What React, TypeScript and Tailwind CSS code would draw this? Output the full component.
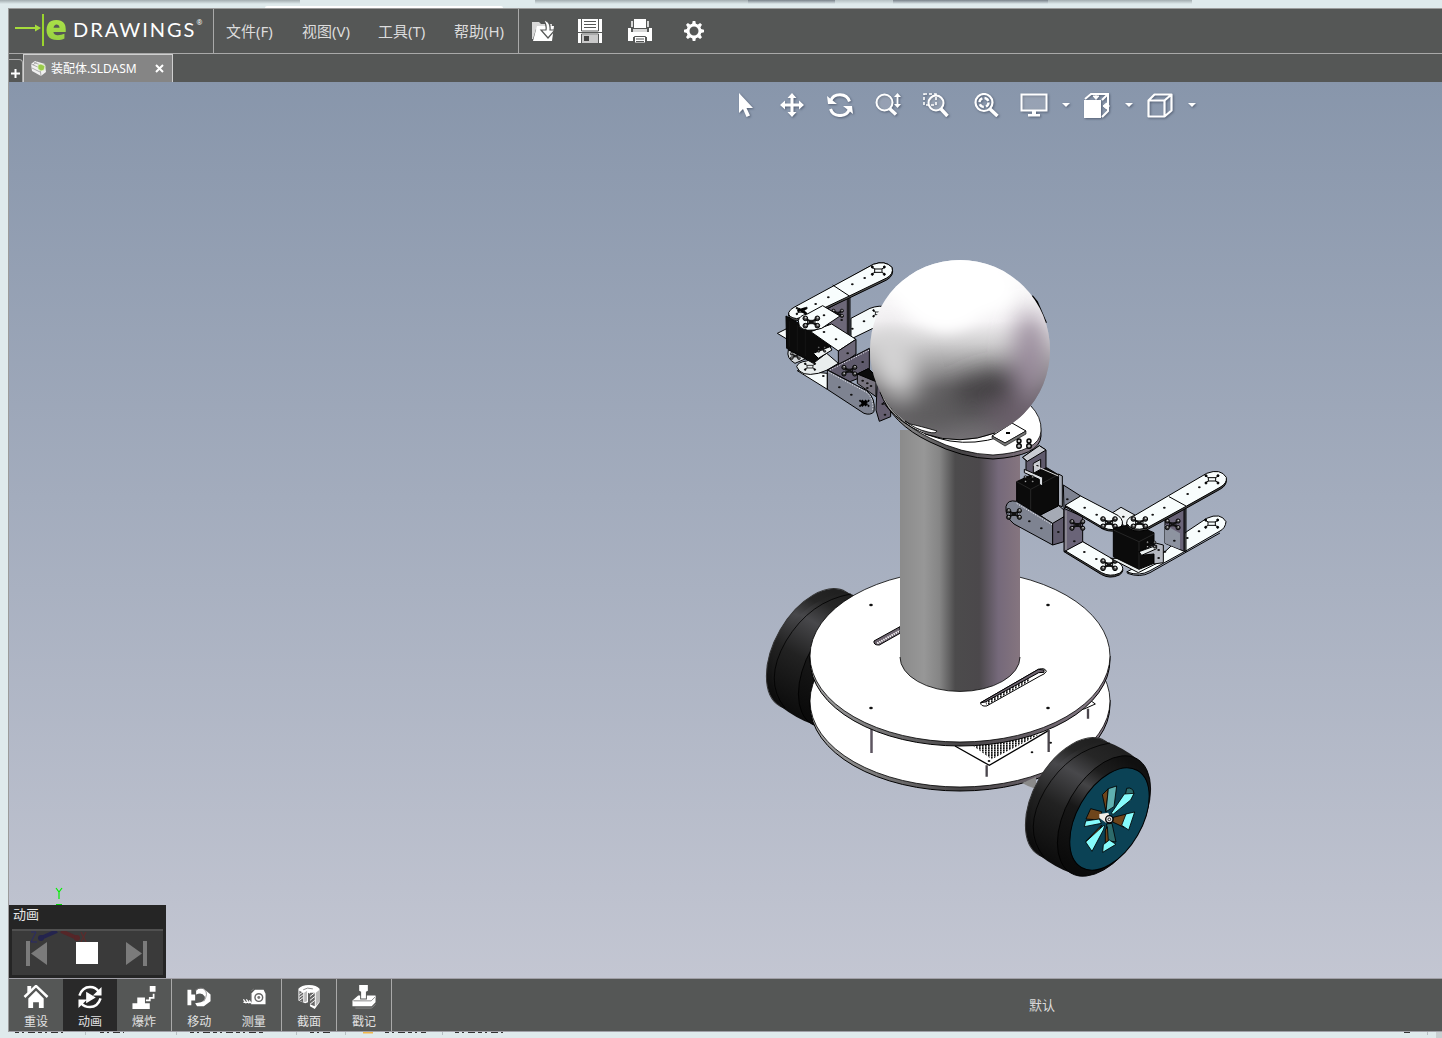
import type { ReactNode } from "react";
import clsx from "clsx";

const cjk = "font-['Noto_Sans','Noto_Sans_CJK_SC',sans-serif]";

function Logo() {
    return (
        <div className="flex h-full w-[205px] shrink-0 items-center border-r border-[#a9a9a9] pl-1.5">
            <svg width="30" height="34" viewBox="0 0 30 34" fill="none">
                <path d="M0 14h22" stroke="#a6dc3c" strokeWidth="2" />
                <path d="M20 10.500l6 3.500-6 3.500z" fill="#a6dc3c" />
                <path d="M28 0v32" stroke="#9ad42e" strokeWidth="2" />
            </svg>
            <span className="w-[26px] bg-gradient-to-b from-[#b4ea4a] to-[#8cc63f] bg-clip-text pb-2 font-['Open_Sans',sans-serif] text-4xl leading-9 font-extrabold text-transparent">
                e
            </span>
            <span className="pb-1 pl-0.5 font-['Lato',sans-serif] text-xl leading-6 font-normal tracking-widest text-white">DRAWINGS</span>
            <span className="pb-4 text-[7px] leading-3 text-white">®</span>
        </div>
    );
}

function IconButton({ label, className, children }: { label: string; className?: string; children: ReactNode }) {
    return (
        <button aria-label={label} className={clsx("flex h-full w-12 shrink-0 items-center justify-center", className)}>
            {children}
        </button>
    );
}

function MenuBar() {
    const menus = ["文件(F)", "视图(V)", "工具(T)", "帮助(H)"];

    return (
        <header className="flex h-[45px] shrink-0 items-center border-b border-[#a9a9a9] bg-[#555756]">
            <Logo />
            <nav className="flex h-full items-center border-r border-[#a9a9a9]">
                {menus.map((menu) => (
                    <button key={menu} className={clsx("w-[76px] pl-3 text-left text-[15px] leading-5 text-[#dcdcdc]", cjk)}>
                        {menu}
                    </button>
                ))}
            </nav>
            <IconButton label="打开" className="ml-px">
                <svg width="24" height="24" viewBox="0 0 24 24">
                    <path d="M0 3h7l2 2h11v5H4L1 20H0z" fill="#d8d8d8" />
                    <path d="M5 7h17l-2 15H1z" fill="#fff" />
                    <path d="M11 1q8 1 7 10h5l-7 8-7-8h5q1-6-3-10z" fill="#fff" stroke="#555756" strokeWidth="1.200" />
                </svg>
            </IconButton>
            <IconButton label="保存" className="-ml-0.5">
                <svg width="24" height="24" viewBox="0 0 24 24">
                    <path d="M0 0h24v24H0z" fill="#fff" />
                    <path d="M3.500 0v12h17V0M0 13.500h24M3.500 24v-9h17v9" fill="none" stroke="#555756" />
                    <path d="M6 2.500h12M6 5.500h12M6 8.500h12" stroke="#555756" strokeWidth="1.200" />
                    <path d="M4 16h16v8H4z" fill="#c9c9c9" />
                    <path d="M6 17h5v5H6z" fill="#444" />
                </svg>
            </IconButton>
            <IconButton label="打印" className="ml-0.5">
                <svg width="24" height="24" viewBox="0 0 24 24">
                    <path d="M3 2h2v6H3zM19 2h2v6h-2z" fill="#d8d8d8" />
                    <path d="M6 0h12v9H6zM0 9h3v4h18V9h3v13h-5v-4H5v4H0z" fill="#fff" />
                    <path d="M5 10h14v3H5z" fill="#d8d8d8" />
                    <path d="M0 13h24v4H0z" fill="#fff" />
                    <path d="M6.500 17.500h11V24h-11z" fill="#fff" stroke="#555756" />
                    <path d="M8 20h8M8 22.500h8" stroke="#555756" />
                </svg>
            </IconButton>
            <IconButton label="选项" className="ml-1.5">
                <svg width="20" height="20" viewBox="-10 -10 20 20">
                    <circle r="6" fill="none" stroke="#fff" strokeWidth="3" />
                    {[0, 45, 90, 135, 180, 225, 270, 315].map((angle) => (
                        <path key={angle} d="M-1.900 -7h3.800l-.6 -3h-2.600z" fill="#fff" transform={`rotate(${angle})`} />
                    ))}
                </svg>
            </IconButton>
        </header>
    );
}

function TabBar() {
    return (
        <div className="flex h-7 shrink-0 items-end bg-[#555756]">
            <button aria-label="新建" className="flex h-[23px] w-3.5 items-center justify-center rounded-tr border-t border-r border-[#a9a9a9] pt-1">
                <svg width="9" height="9" viewBox="0 0 9 9">
                    <path d="M4.500 0v9M0 4.500h9" stroke="#fff" strokeWidth="2" />
                </svg>
            </button>
            <div className="flex h-7 w-[150px] items-center border border-b-0 border-[#cfcfcf] bg-[#858585] pl-1.5">
                <svg width="17" height="17" viewBox="0 0 17 17">
                    <path d="M1 4l4-3 10 3 1 8-5 4-9-5z" fill="#f0f0f0" />
                    <path d="M1 4l9 4 5-4M10 8l1 8M4 2.500l8 3M7 1.500L3 5M2 8l8 4" fill="none" stroke="#999" strokeWidth=".8" />
                    <path d="M8 5l3-1 4 2-1 4-3 1-3-2z" fill="#9acb4a" stroke="#e5f4cc" strokeWidth=".7" />
                </svg>
                <span className={clsx("ml-1 text-xs leading-5 whitespace-nowrap text-white", cjk)}>装配体.SLDASM</span>
                <button aria-label="关闭" className="mr-1 ml-auto p-1">
                    <svg width="9" height="9" viewBox="0 0 9 9">
                        <path d="M1 1l7 7M8 1L1 8" stroke="#fff" strokeWidth="2" />
                    </svg>
                </button>
            </div>
        </div>
    );
}

function Caret() {
    return (
        <button aria-label="更多" className="flex w-[15px] items-center justify-center">
            <svg width="8" height="4" viewBox="0 0 8 4">
                <path d="M0 0h8L4 4z" fill="#fff" />
            </svg>
        </button>
    );
}

function ViewTools() {
    return (
        <div className="absolute top-[5px] left-[713px] flex h-9 drop-shadow-[1px_1px_1px_rgba(50,60,80,0.6)]">
            <IconButton label="选择">
                <svg width="16" height="24" viewBox="0 0 16 24">
                    <path d="M1 0v20l4-4 3.500 8 3.500-1.500L8.500 15H15z" fill="#fff" />
                </svg>
            </IconButton>
            <IconButton label="平移" className="-ml-0.5">
                <svg width="24" height="24" viewBox="0 0 24 24">
                    <path d="M12 0l4.500 5h-3v5.500H19v-3l5 4.500-5 4.500v-3h-5.500V19h3L12 24l-4.500-5h3v-5.500H5v3L0 12l5-4.500v3h5.500V5h-3z" fill="#fff" />
                </svg>
            </IconButton>
            <IconButton label="旋转">
                <svg width="26" height="24" viewBox="0 0 26 24">
                    <path d="M3.500 8a10 9.500 0 0 1 19 .5M22.500 16a10 9.500 0 0 1-19 0" fill="none" stroke="#fff" strokeWidth="3" />
                    <path d="M0 3l1 8h9zM26 21l-1-8h-9z" fill="#fff" />
                </svg>
            </IconButton>
            <IconButton label="缩放">
                <svg width="26" height="24" viewBox="0 0 26 24" fill="none" stroke="#fff">
                    <circle cx="9.500" cy="9.500" r="8" strokeWidth="2" fill="#fff" fillOpacity=".18" />
                    <path d="M14.500 15.500l6.500 6" strokeWidth="3.500" />
                    <path d="M22.500 3v9" strokeWidth="1.800" />
                    <path d="M19 4l3.500-4L26 4zM19 11l3.500 4 3.500-4z" fill="#fff" stroke="none" />
                </svg>
            </IconButton>
            <IconButton label="局部放大">
                <svg width="26" height="24" viewBox="0 0 26 24" fill="none" stroke="#fff">
                    <path d="M1 1h12v11H1z" strokeWidth="1.600" strokeDasharray="3 2" />
                    <circle cx="13" cy="10" r="7.500" strokeWidth="2" fill="#fff" fillOpacity=".18" />
                    <path d="M18 16l6.500 7" strokeWidth="3.500" />
                </svg>
            </IconButton>
            <IconButton label="整屏显示" className="ml-0.5">
                <svg width="26" height="24" viewBox="0 0 26 24" fill="none" stroke="#fff">
                    <circle cx="11" cy="9.500" r="8.500" strokeWidth="2.200" />
                    <path d="M17 16l7.500 7" strokeWidth="3.500" />
                    <circle cx="11" cy="9.500" r="4.500" strokeWidth="2.400" strokeDasharray="4.800 2.270" />
                </svg>
            </IconButton>
            <IconButton label="全屏">
                <svg width="28" height="24" viewBox="0 0 28 24">
                    <path d="M1.500 1.500h25v16h-25z" fill="#fff" fillOpacity=".2" stroke="#fff" strokeWidth="2" />
                    <path d="M12 18h4v3h4v2.500H8V21h4z" fill="#fff" />
                </svg>
            </IconButton>
            <Caret />
            <IconButton label="视图方向">
                <svg width="26" height="25" viewBox="0 0 26 25">
                    <path d="M0 7h17v18H0z" fill="#fff" />
                    <path d="M1 6l6-5h17v17l-6 6M18 7l6-6" fill="none" stroke="#fff" strokeWidth="2" />
                    <path d="M12 0v4M9 3h6l-3 3.500zM26 13h-4M22.500 10v6L19 13z" fill="#fff" stroke="#fff" />
                </svg>
            </IconButton>
            <Caret />
            <IconButton label="显示样式">
                <svg width="26" height="25" viewBox="0 0 26 25">
                    <path d="M1.500 7.500h16v16h-16zM1.500 7.500l6-6h17v16l-7 6M17.500 7.500l7-6" fill="none" stroke="#fff" strokeWidth="2.200" strokeLinejoin="round" />
                </svg>
            </IconButton>
            <Caret />
        </div>
    );
}

// four screws around a horn, drawn in the 3x part space
function Horn({ x, y, k = 1, bolts = false }: { x: number; y: number; k?: number; bolts?: boolean }) {
    return (
        <g transform={`translate(${x} ${y}) scale(${k})`}>
            <path d="M-20 -10L-10 -5H10L20 -10M-20 10L-10 5H10L20 10M-11 -6V6M11 -6V6" fill="none" stroke="#000" strokeWidth="3" />
            {bolts && <path d="M-14 -8L14 8M14 -8L-14 8" stroke="#111" strokeWidth="6" />}
            {[[-18, -11], [18, -11], [-18, 11], [18, 11]].map(([cx, cy]) => (
                <g key={`${cx}${cy}`}>
                    <ellipse cx={cx} cy={cy} rx={bolts ? 7 : 3} ry={bolts ? 7 : 3} fill={bolts ? "#3a3a3a" : "#000"} stroke="#000" strokeWidth="3" />
                    {bolts && <ellipse cx={cx + 1} cy={cy - 2} rx="3" ry="2.500" fill="#cfcfcf" stroke="none" />}
                </g>
            ))}
        </g>
    );
}

function Holes({ at }: { at: number[][] }) {
    return (
        <>
            {at.map(([cx, cy]) => (
                <ellipse key={`${cx}-${cy}`} cx={cx} cy={cy} rx="4" ry="3" fill="#111" stroke="none" />
            ))}
        </>
    );
}

function LeftArm() {
    return (
        <g transform="translate(770 250) scale(.33333)" stroke="#000" strokeWidth="3" strokeLinejoin="round">
            <path d="M243 205L300 175Q330 164 350 172V215L243 267z" fill="#f6fbfb" />
            <Horn x={325} y={190} k={0.8} />
            <Holes at={[[247, 236], [282, 214]]} />
            <path d="M175 175L240 138V262L205 245L175 230z" fill="#6d6878" />
            <path d="M232 142V258M236 140V262" fill="none" stroke="#111" />
            <Horn x={203} y={190} k={0.7} bolts />
            <path d="M72 175L310 43Q345 30 366 52Q374 76 350 90L240 143L120 200L80 212Q52 208 56 190Q60 180 72 175z" fill="#555" />
            <path d="M72 172L310 43Q345 30 366 52Q372 72 350 84L240 137L120 194L80 206Q54 202 56 188Q60 178 72 172z" fill="#f8fdfd" />
            <path d="M188 105L238 138" fill="none" />
            <Holes at={[[247, 103], [284, 84], [137, 162], [175, 142]]} />
            <Horn x={325} y={62} />
            <Horn x={95} y={183} k={0.8} />
            <path d="M82 183l26-8M84 176l24 14" strokeWidth="8" />
            <path d="M22 250L52 235V268z" fill="#f6fbfb" />
            <path d="M55 300Q48 325 75 340L110 325z" fill="#d5d9dc" />
            <Horn x={76} y={318} k={0.6} bolts />
            <path d="M82 362L172 418V370z" fill="#f6fbfb" />
            <path d="M80 350Q84 336 110 333L170 310L205 340L172 360L145 370Q92 382 80 350z" fill="#e9eeee" />
            <Horn x={120} y={350} k={0.8} />
            <path d="M48 198L130 245L182 275V300L130 340L50 295z" fill="#0b0b0b" />
            <path d="M58 214V290M82 226V304M106 240V318" fill="none" stroke="#1b1b1b" strokeWidth="2" />
            <path d="M130 310L180 290L186 300L145 325z" fill="#f0f4f4" />
            <Horn x={155} y={298} k={0.5} bolts />
            <path d="M122 245L185 222L258 268L205 303z" fill="#f8fdfd" />
            <path d="M205 303L258 268V312L205 350z" fill="#6d6878" />
            <Holes at={[[162, 246], [198, 268], [233, 310]]} />
            <path d="M85 212Q88 196 112 192L158 167L210 198L155 235Q105 250 88 228z" fill="#f8fdfd" />
            <Horn x={124} y={216} bolts />
            <Holes at={[[162, 196], [215, 210]]} />
            <path d="M172 360L298 295V372L240 395z" fill="#5f5a6c" />
            <path d="M172 364L298 300" fill="none" stroke="#e8e8ee" strokeDasharray="4 4" />
            <Holes at={[[278, 336]]} />
            <Horn x={238} y={362} k={0.9} bolts />
            <path d="M262 372L295 356L318 378V440L262 400z" fill="#77747f" />
            <path d="M262 372L295 356L318 378V395z" fill="#0b0b0b" />
            <Holes at={[[278, 392], [292, 400], [292, 414], [303, 408]]} />
            <path d="M322 395L362 440V500L328 514L318 480z" fill="#655e70" />
            <Holes at={[[338, 462], [345, 494]]} />
            <path d="M172 360L290 422Q318 445 312 485Q302 497 282 490L172 418z" fill="#7e8391" />
            <path d="M175 366L290 427Q312 446 308 480" fill="none" stroke="#e8e8ee" strokeDasharray="4 4" />
            <Holes at={[[208, 412], [244, 434], [160, 378]]} />
            <Horn x={283} y={460} k={0.7} />
            <path d="M274 452l16 14M290 452l-16 16" strokeWidth="9" />
        </g>
    );
}

function RightArm() {
    return (
        <g transform="translate(990 400) scale(.33333)" stroke="#000" strokeWidth="3" strokeLinejoin="round">
            <path d="M98 172L148 137L168 150V232L108 218V182z" fill="#5f5a6c" />
            <path d="M98 172L148 137L168 150L112 184z" fill="#c9ccd2" />
            <path d="M130 190l22-12v30l-22 12z" fill="#c9ccd2" />
            <Holes at={[[142, 198]]} />
            <path d="M220 255L272 288V300L222 325z" fill="#7e8391" />
            <Holes at={[[232, 298]]} />
            <path d="M150 345L205 316L222 330V352L188 372z" fill="#a5aab5" />
            <path d="M205 222L217 228V320L205 316z" fill="#a5aab5" />
            <path d="M80 245L170 203L205 224V318L150 346L80 310z" fill="#0b0b0b" />
            <path d="M80 245L122 268L205 224M122 268V332" fill="none" stroke="#262626" />
            <path d="M103 208L158 232V258L148 253V238L103 218z" fill="#d8dbe0" />
            <path d="M130 195L205 228" fill="none" stroke="#ddd" />
            <Horn x={117} y={238} k={0.6} bolts />
            <path d="M48 320Q52 298 80 304L188 370V435L72 372Q45 350 48 320z" fill="#7e8391" />
            <path d="M188 370L222 350V425L188 435z" fill="#5f5a6c" />
            <path d="M80 310L186 374" fill="none" stroke="#e8e8ee" strokeDasharray="4 4" />
            <Holes at={[[118, 364], [154, 385], [205, 396]]} />
            <Horn x={72} y={342} k={0.9} bolts />
            <path d="M365 340L393 322L440 348L410 385z" fill="#eef2f3" />
            <Holes at={[[400, 350]]} />
            <path d="M222 455L278 425L390 495Q408 512 388 525Q360 538 335 524z" fill="#444" />
            <path d="M222 450L278 425L390 490Q408 508 388 520Q360 532 335 518z" fill="#f8fdfd" />
            <path d="M222 325L278 350V425L222 455z" fill="#6a6478" />
            <path d="M228 332V450" fill="none" stroke="#aaa" />
            <path d="M225 320L272 290L385 350Q405 368 393 386Q370 400 340 388z" fill="#444" />
            <path d="M225 316L272 288L385 347Q405 364 393 380Q370 396 340 383z" fill="#f8fdfd" />
            <Holes at={[[284, 323], [320, 344], [283, 456], [319, 477], [253, 424]]} />
            <Horn x={357} y={368} bolts />
            <Horn x={357} y={494} bolts />
            <Horn x={262} y={375} k={0.9} bolts />
            <path d="M590 395L650 355Q692 336 708 365Q706 385 690 393L592 450L480 512Q450 530 410 516L440 500L525 455z" fill="#f8fdfd" />
            <path d="M412 520Q450 534 480 518L690 399" fill="none" />
            <Holes at={[[592, 414], [627, 394], [525, 455]]} />
            <Horn x={665} y={371} />
            <path d="M362 475L445 518L500 490V475z" fill="#e9eeee" />
            <path d="M370 385L430 372L492 398V490L447 508L370 470z" fill="#0b0b0b" />
            <path d="M370 390L447 425L492 402M447 425V508" fill="none" stroke="#262626" />
            <path d="M447 455L500 430L520 435V488L492 492V462L452 466z" fill="#b6b9c1" />
            <path d="M447 455L500 436V446L455 466z" fill="#e9eeee" />
            <Holes at={[[506, 450], [506, 474]]} />
            <Horn x={483} y={434} k={0.6} bolts />
            <path d="M525 355L585 320V455L525 430z" fill="#6a6478" />
            <path d="M525 375L562 395L570 400V448L525 430z" fill="#8d93a0" stroke="none" />
            <path d="M582 322V452M588 318V456" fill="none" />
            <Horn x={548} y={373} k={0.9} bolts />
            <Holes at={[[553, 422]]} />
            <path d="M410 375Q410 356 435 350L650 224Q692 208 709 236Q712 256 690 268L590 324L470 390Q424 402 410 375z" fill="#444" />
            <path d="M410 370Q410 352 435 346L650 220Q692 204 709 232Q712 250 690 262L590 318L470 384Q424 396 410 370z" fill="#f8fdfd" />
            <path d="M537 290L588 318" fill="none" />
            <Holes at={[[593, 282], [628, 262], [488, 344], [523, 323]]} />
            <Horn x={666} y={238} />
            <Horn x={448} y={368} bolts />
        </g>
    );
}

function Tyre({ x, y }: { x: number; y: number }) {
    return (
        <g transform={`translate(${x} ${y})`}>
            <ellipse rx="66" ry="38" transform="rotate(-60)" fill="url(#tread)" stroke="#333" />
            <path d="M33 -57Q52 -50 65 -39L-1 75Q-16 70 -33 57Q-50 20 -32 -10Q-8 -50 33 -57z" fill="url(#treadBand)" />
            <path d="M33 -57Q-8 -50 -32 -10Q-55 30 -33 57" transform="translate(5 2)" fill="none" stroke="#000" strokeWidth=".8" />
            <ellipse rx="66" ry="38" transform="translate(32 18) rotate(-60)" fill="url(#side)" stroke="#000" strokeWidth=".8" />
        </g>
    );
}

function Robot() {
    return (
        <svg className="absolute inset-0 h-full w-full" viewBox="9 82 1433 896" preserveAspectRatio="xMidYMid meet">
            <defs>
                <linearGradient id="column">
                    <stop offset="0" stopColor="#8b8b8b" />
                    <stop offset=".2" stopColor="#979797" />
                    <stop offset=".33" stopColor="#858585" />
                    <stop offset=".46" stopColor="#4c4b4c" />
                    <stop offset=".66" stopColor="#4b484b" />
                    <stop offset=".82" stopColor="#75697a" />
                    <stop offset="1" stopColor="#85757f" />
                </linearGradient>
                <linearGradient id="rim">
                    <stop offset="0" stopColor="#a5a5a5" />
                    <stop offset=".5" stopColor="#454345" />
                    <stop offset="1" stopColor="#8a7d8a" />
                </linearGradient>
                <linearGradient id="tread" gradientUnits="userSpaceOnUse" x1="-60" y1="0" x2="60" y2="0">
                    <stop offset="0" stopColor="#0c0c0c" />
                    <stop offset=".4" stopColor="#222222" />
                    <stop offset=".68" stopColor="#48484b" />
                    <stop offset=".85" stopColor="#262626" />
                    <stop offset="1" stopColor="#202020" />
                </linearGradient>
                <linearGradient id="treadBand" gradientUnits="userSpaceOnUse" x1="-33" y1="57" x2="33" y2="-57">
                    <stop offset="0" stopColor="#0c0c0c" />
                    <stop offset=".4" stopColor="#222222" />
                    <stop offset=".68" stopColor="#48484b" />
                    <stop offset=".85" stopColor="#262626" />
                    <stop offset="1" stopColor="#202020" />
                </linearGradient>
                <linearGradient id="side" gradientUnits="userSpaceOnUse" x1="-60" y1="0" x2="60" y2="0">
                    <stop offset="0" stopColor="#0a0a0a" />
                    <stop offset=".45" stopColor="#181818" />
                    <stop offset=".65" stopColor="#444446" />
                    <stop offset=".8" stopColor="#1e1e1e" />
                    <stop offset="1" stopColor="#101010" />
                </linearGradient>
                <linearGradient id="ball" x1="0" y1="0" x2="0" y2="1">
                    <stop offset="0" stopColor="#fff" />
                    <stop offset=".34" stopColor="#f4f2f4" />
                    <stop offset=".46" stopColor="#d0cfd0" />
                    <stop offset=".58" stopColor="#a09fa0" />
                    <stop offset=".72" stopColor="#6c6a6c" />
                    <stop offset=".85" stopColor="#5f5d60" />
                    <stop offset="1" stopColor="#757276" />
                </linearGradient>
                <pattern id="mesh" width="9" height="7" patternUnits="userSpaceOnUse">
                    <path d="M0 0h5v6H0z" fill="#111" />
                </pattern>
                <filter id="soft" x="-80%" y="-80%" width="260%" height="260%">
                    <feGaussianBlur stdDeviation="7" />
                </filter>
                <filter id="softer" x="-100%" y="-100%" width="300%" height="300%">
                    <feGaussianBlur stdDeviation="12" />
                </filter>
                <clipPath id="ballClip">
                    <circle cx="960" cy="350" r="90" />
                </clipPath>
            </defs>

            <LeftArm />
            <Tyre x={813} y={649} />

            {/* chassis plates */}
            <path d="M810 700v5a150 86 0 0 0 300 0v-5z" fill="url(#rim)" stroke="#000" />
            <ellipse cx="960" cy="701" rx="150" ry="86" fill="#fff" stroke="#000" strokeWidth=".8" />
            <g transform="translate(940 640) scale(.33333)" stroke="#000" strokeWidth="3">
                <path d="M45 318L148 376L325 272" fill="#fff" strokeWidth="4" />
                <path d="M100 318L155 358L300 283z" fill="url(#mesh)" stroke="none" />
                <path d="M430 208L466 192L455 184" fill="none" />
                <path d="M140 376v34M326 270v66M444 206v30" stroke="#4a454c" strokeWidth="7" />
                <Holes at={[[276, 337], [147, 363], [332, 308]]} />
            </g>
            <path d="M871.500 728v25" stroke="#5d5560" strokeWidth="2.500" />
            <path d="M810 656v4a150 86 0 0 0 300 0v-4z" fill="url(#rim)" stroke="#000" />
            <ellipse cx="960" cy="656" rx="150" ry="86" fill="#fff" stroke="#000" strokeWidth=".8" />
            {[[871, 605], [1048, 605], [871, 708], [1048, 708]].map(([cx, cy]) => (
                <ellipse key={`${cx}${cy}`} cx={cx} cy={cy} rx="1.800" ry="1.300" fill="#111" />
            ))}
            <g transform="translate(760 560) scale(.33333)">
                <path d="M342 243L420 200V220L358 255Q340 256 342 243z" fill="#6c626e" stroke="#000" strokeWidth="3" />
                <path d="M352 250L420 212" stroke="#fff" strokeWidth="6" strokeDasharray="4 3" />
            </g>
            <g transform="translate(940 640) scale(.33333)">
                <path d="M122 188L295 88Q315 82 319 94Q316 102 300 108L140 198Q122 200 122 188z" fill="#fff" stroke="#000" strokeWidth="3" />
                <path d="M140 197L270 122V104L135 182z" fill="url(#mesh)" />
                <path d="M122 188L295 88L312 90V97L296 98L136 186z" fill="#6c626e" stroke="#000" strokeWidth="3" />
            </g>

            <path d="M900 430V657a60 34.500 0 0 0 120 0V430z" fill="url(#column)" />
            <path d="M900 657a60 34.500 0 0 0 120 0" fill="none" stroke="#000" strokeWidth=".8" />

            {/* shoulder plate */}
            <path d="M880 392Q892 424 930 442Q962 458 993 459Q1040 456 1041 436Q1042 420 1030 405L960 380z" fill="url(#rim)" stroke="#000" />
            <path d="M880 388Q892 420 930 438Q962 454 993 455Q1040 452 1041 431Q1042 417 1030 405L960 380z" fill="#fff" stroke="#000" strokeWidth=".8" />
            <path d="M883 402Q905 432 950 441Q975 445 1000 437" fill="none" stroke="#000" />
            <path d="M992 436L1012 423L1026 431L1005 443z" fill="#fff" stroke="#000" />
            <path d="M992 436V438L1005 446L1026 434V431L1005 443z" fill="#777" stroke="#000" strokeWidth=".6" />
            <path d="M1006 433h4" stroke="#000" strokeWidth="2" />
            {[1019, 1029].map((cx) => (
                <g key={cx} fill="#bbb" stroke="#000" strokeWidth="1.400">
                    <circle cx={cx} cy="441" r="2" />
                    <circle cx={cx} cy="446" r="2.300" />
                </g>
            ))}
            <path d="M1032 296L1037 302L1046 323" fill="none" stroke="#000" strokeWidth="2" />

            {/* head */}
            <circle cx="960" cy="350" r="90" fill="url(#ball)" />
            <g clipPath="url(#ballClip)">
                <g filter="url(#softer)">
                    <ellipse cx="894" cy="362" rx="20" ry="36" fill="#d6d5d6" transform="rotate(-15 894 362)" />
                    <ellipse cx="930" cy="410" rx="30" ry="18" fill="#5e5d5f" />
                    <ellipse cx="990" cy="388" rx="42" ry="16" fill="#403d40" transform="rotate(-12 990 388)" />
                    <ellipse cx="1030" cy="356" rx="16" ry="46" fill="#9a8b9c" />
                    <ellipse cx="1018" cy="416" rx="30" ry="20" fill="#6a5f6b" />
                </g>
                <g filter="url(#soft)">
                    <path d="M885 290Q890 260 960 252Q1010 258 1016 290Q1008 312 985 314Q965 332 942 332Q915 326 900 304z" fill="#fff" />
                </g>
            </g>
            <path d="M910 424Q920 426 937 431Q936 434 928 432Q915 429 905 421z" fill="#fff" stroke="#000" strokeWidth=".8" />
            <path d="M925 434Q960 446 995 433" fill="none" stroke="#000" />

            <RightArm />

            {/* drive wheel */}
            <path d="M1022 783l14-6v12l-8-3z" fill="#8a8a8a" />
            <Tyre x={1072} y={798} />
            <ellipse rx="56" ry="32.500" transform="translate(1109.500 819) rotate(-60)" fill="#0b4255" stroke="#000" />
            <g transform="translate(940 640) scale(.33333)" stroke="#000" strokeWidth="2.500" strokeLinejoin="round">
                <path d="M487 464L505 446L498 515z" fill="#6e451b" />
                <path d="M505 446L530 438L522 500L498 515z" fill="#5fb0b0" />
                <path d="M560 445Q578 440 582 460L555 470z" fill="#2d6b6b" />
                <path d="M553 462L582 460L572 480L518 524L515 518z" fill="#86fbfb" />
                <path d="M452 506L485 515L478 540L438 537z" fill="#6e451b" />
                <path d="M437 543L478 537L484 550L433 560z" fill="#86fbfb" />
                <path d="M520 532L560 522L552 562L518 546z" fill="#6e451b" />
                <path d="M558 522L584 516L566 570L545 556z" fill="#86fbfb" />
                <path d="M437 604L485 555L475 578z" fill="#6e451b" />
                <path d="M437 606L490 557H494L490 570L456 634z" fill="#86fbfb" />
                <path d="M500 552L516 550L528 606L500 602z" fill="#2d6b6b" />
                <path d="M496 570L502 560L505 602L496 610z" fill="#6e451b" />
                <path d="M490 614L508 600L528 613L488 637z" fill="#86fbfb" />
                <path d="M478 522L505 518L515 546L498 548L478 534z" fill="#f1eee8" stroke="none" />
                <circle cx="508" cy="538" r="11" fill="#ddd" strokeWidth="4" />
                <circle cx="508" cy="538" r="4" fill="#fff" />
            </g>
        </svg>
    );
}

function AnimationPanel() {
    return (
        <>
            <svg className="absolute bottom-0 left-0" width="100" height="96" viewBox="9 882 100 96">
                <g fill="none" strokeWidth="1.200">
                    <path d="M56 888l3 4 3-4M59 892v7" stroke="#00f000" />
                    <path d="M56 905h6" stroke="#00d000" strokeWidth="2" />
                </g>
            </svg>
            <section className="absolute bottom-0 left-0 w-[157px] bg-[#252525] px-[3px] pb-[3px]">
                <h2 className={clsx("h-6 pl-px text-[13px] leading-[18px] text-[#e6e6e6]", cjk)}>动画</h2>
                <div className="relative flex h-[46px] items-center justify-between border-t-2 border-[#505050] bg-[#3a3a3a] pr-4 pl-3.5">
                    <svg className="absolute top-0 left-0" width="90" height="16" viewBox="12 931 90 16" fill="none">
                        <path d="M57 931L41 938" stroke="#24244e" strokeWidth="4" />
                        <path d="M61 931L77 938" stroke="#552628" strokeWidth="4" />
                        <circle cx="41" cy="938" r="3" fill="#24244e" />
                        <circle cx="77" cy="938" r="3" fill="#552628" />
                        <path d="M31 932h5l-5 10h6" stroke="#292969" />
                        <path d="M81 932l5 10M86 932l-5 10" stroke="#672727" />
                    </svg>
                    <button aria-label="上一步" className="relative">
                        <svg width="21" height="25" viewBox="0 0 21 25" fill="#7b7b7b">
                            <path d="M0 0h4v25H0zM21 1v23L5 12.500z" />
                        </svg>
                    </button>
                    <button aria-label="停止" className="relative size-[22px] bg-white" />
                    <button aria-label="下一步" className="relative">
                        <svg width="21" height="25" viewBox="0 0 21 25" fill="#7b7b7b">
                            <path d="M17 0h4v25h-4zM0 1v23l16-11.500z" />
                        </svg>
                    </button>
                </div>
            </section>
        </>
    );
}

function ToolButton({ label, active, children }: { label: string; active?: boolean; children: ReactNode }) {
    return (
        <button className={clsx("flex h-full flex-1 flex-col items-center pt-1.5", active && "bg-[#292929]")}>
            <svg width="26" height="26" viewBox="0 0 26 26" fill="#fff">
                {children}
            </svg>
            <span className={clsx("mt-[3px] text-xs leading-[18px] text-[#e2e2e2]", cjk)}>{label}</span>
        </button>
    );
}

function BottomBar() {
    const group = "flex h-full border-r border-[#a9a9a9]";

    return (
        <footer className="flex h-[54px] shrink-0 items-center border-y border-[#a09fa6] bg-[#555756]">
            <div className={clsx(group, "w-[163px]")}>
                <ToolButton label="重设">
                    <path d="M1 12.500L13 1l12 11.500" fill="none" stroke="#fff" strokeWidth="2.600" />
                    <path d="M4 1h4v4L4 8zM13 6l8 8v10h-5v-6h-6v6H5V14z" />
                </ToolButton>
                <ToolButton label="动画" active>
                    <path d="M2 11Q5 2 13 2q6 0 9 5M24 14q-3 9-11 9-6 0-9-4" fill="none" stroke="#fff" strokeWidth="2.600" />
                    <path d="M25 2v9h-9zM1 24v-9h9zM9 7l10 6-10 6z" />
                </ToolButton>
                <ToolButton label="爆炸">
                    <path d="M19 1h6v6h-6zM6 13h8v6h5v6H1v-6h5z" />
                    <path d="M23 9v4.500h-4V16h-4" fill="none" stroke="#fff" strokeWidth="1.800" />
                </ToolButton>
            </div>
            <div className={clsx(group, "w-[110px]")}>
                <ToolButton label="移动">
                    <path d="M1 5h4v5h4v6H5v5H1z" />
                    <path d="M10 6Q12 3 18 4l7 6v7l-7 5h-7l-2-3 6-1q5-2 4-6-3-5-9-2z" />
                    <path d="M9 5.500Q15 1 19 5t-1 12" fill="none" stroke="#777" strokeWidth=".8" />
                </ToolButton>
                <ToolButton label="测量">
                    <path d="M10 20V9l4-4h9l2 4v11z" />
                    <circle cx="18" cy="13" r="4" fill="none" stroke="#666" strokeWidth="1.500" />
                    <circle cx="18" cy="13" r="1.500" fill="#777" />
                    <path d="M10 6L13 4M10 9v9" stroke="#777" />
                    <path d="M2 15l3 4M5 15l3 4M8 16l2 3M2 18h8" fill="none" stroke="#fff" strokeWidth="1.300" />
                </ToolButton>
            </div>
            <div className={clsx(group, "w-[55px]")}>
                <ToolButton label="截面">
                    <path d="M2 4Q5 0 13 0t11 4v14l-5 7-5-3V9l-2-1v10l-3 1-7-3z" />
                    <path d="M3 6l4 2v10l-4-2zM14 8h5v14l-5-2z" fill="#666" />
                    <path d="M3 10l4-3M3 13l4-3M3 16l4-3M14 12l5-4M14 16l5-4M14 20l5-4" stroke="#fff" />
                    <path d="M8 8l3-2v11l-3 1zM20 8l4-3v12l-4 5z" fill="#b9b9b9" />
                    <path d="M7 5q4-3 10-1" fill="none" stroke="#888" />
                </ToolButton>
            </div>
            <div className={clsx(group, "w-[55px]")}>
                <ToolButton label="戳记">
                    <path d="M8 0h9v6l-2 1v7h-5V7L8 6zM1 16l6-5h2v4h7v-4h9v2l-4 4z" />
                    <path d="M1 16h20l4-4v6l-4 4H1z" />
                    <path d="M2 16.500h18.500l4-4M4 24h17l4-4" fill="none" stroke="#888" />
                </ToolButton>
            </div>
            <span className={clsx("mr-[387px] ml-auto text-[13px] leading-5 text-[#dcdcdc]", cjk)}>默认</span>
        </footer>
    );
}

// the strip of the window behind that shows above the frame
function BackdropTop() {
    const shade = "h-1 bg-gradient-to-b to-[#dfeaec]";

    return (
        <div className="relative flex h-2 shrink-0 items-start">
            <div className={clsx(shade, "w-[300px] from-[#a3adb0]")} />
            <div className={clsx(shade, "ml-[235px] w-[213px] from-[#a3adb0]")} />
            <div className={clsx(shade, "w-[87px] from-[#79828a]")} />
            <div className={clsx(shade, "w-[58px] from-[#b5c0c3]")} />
            <div className={clsx(shade, "w-[155px] from-[#79828a]")} />
            <div className={clsx(shade, "w-36 from-[#a3adb0]")} />
            <div className="absolute bottom-0 left-[265px] h-0.5 w-[238px] rounded-t bg-white" />
        </div>
    );
}

function BackdropBottom() {
    return (
        <svg className="h-1.5 w-full shrink-0" fill="none">
            <path d="M15 .5h48M100 .5h24M190 .5h76M310 .5h20M385 .5h41M455 .5h48" stroke="#333" strokeDasharray="4 3 2 4 7 3" />
            <path d="M363 .5h10" stroke="#f2b84b" strokeWidth="2" />
            <path d="M85.500 0v3M176.500 0v3M296.500 0v3M345.500 0v3M442.500 0v3M1427.500 0v3" stroke="#b5bfc2" />
            <path d="M1404 .5h6" stroke="#333" />
            <path d="M1436 0h6v6h-6z" fill="#c8cfd1" />
        </svg>
    );
}

export default function App() {
    return (
        <div className="flex h-screen flex-col overflow-hidden bg-[#dfeaec]">
            <BackdropTop />
            <div className="ml-2 flex min-h-0 flex-1 flex-col border-t border-l border-[#9b9b9b]">
                <MenuBar />
                <TabBar />
                <main className="relative min-h-0 flex-1 overflow-hidden bg-gradient-to-b from-[#8896ab] to-[#c3c6d2]">
                    <Robot />
                    <ViewTools />
                    <AnimationPanel />
                </main>
                <BottomBar />
            </div>
            <BackdropBottom />
        </div>
    );
}
